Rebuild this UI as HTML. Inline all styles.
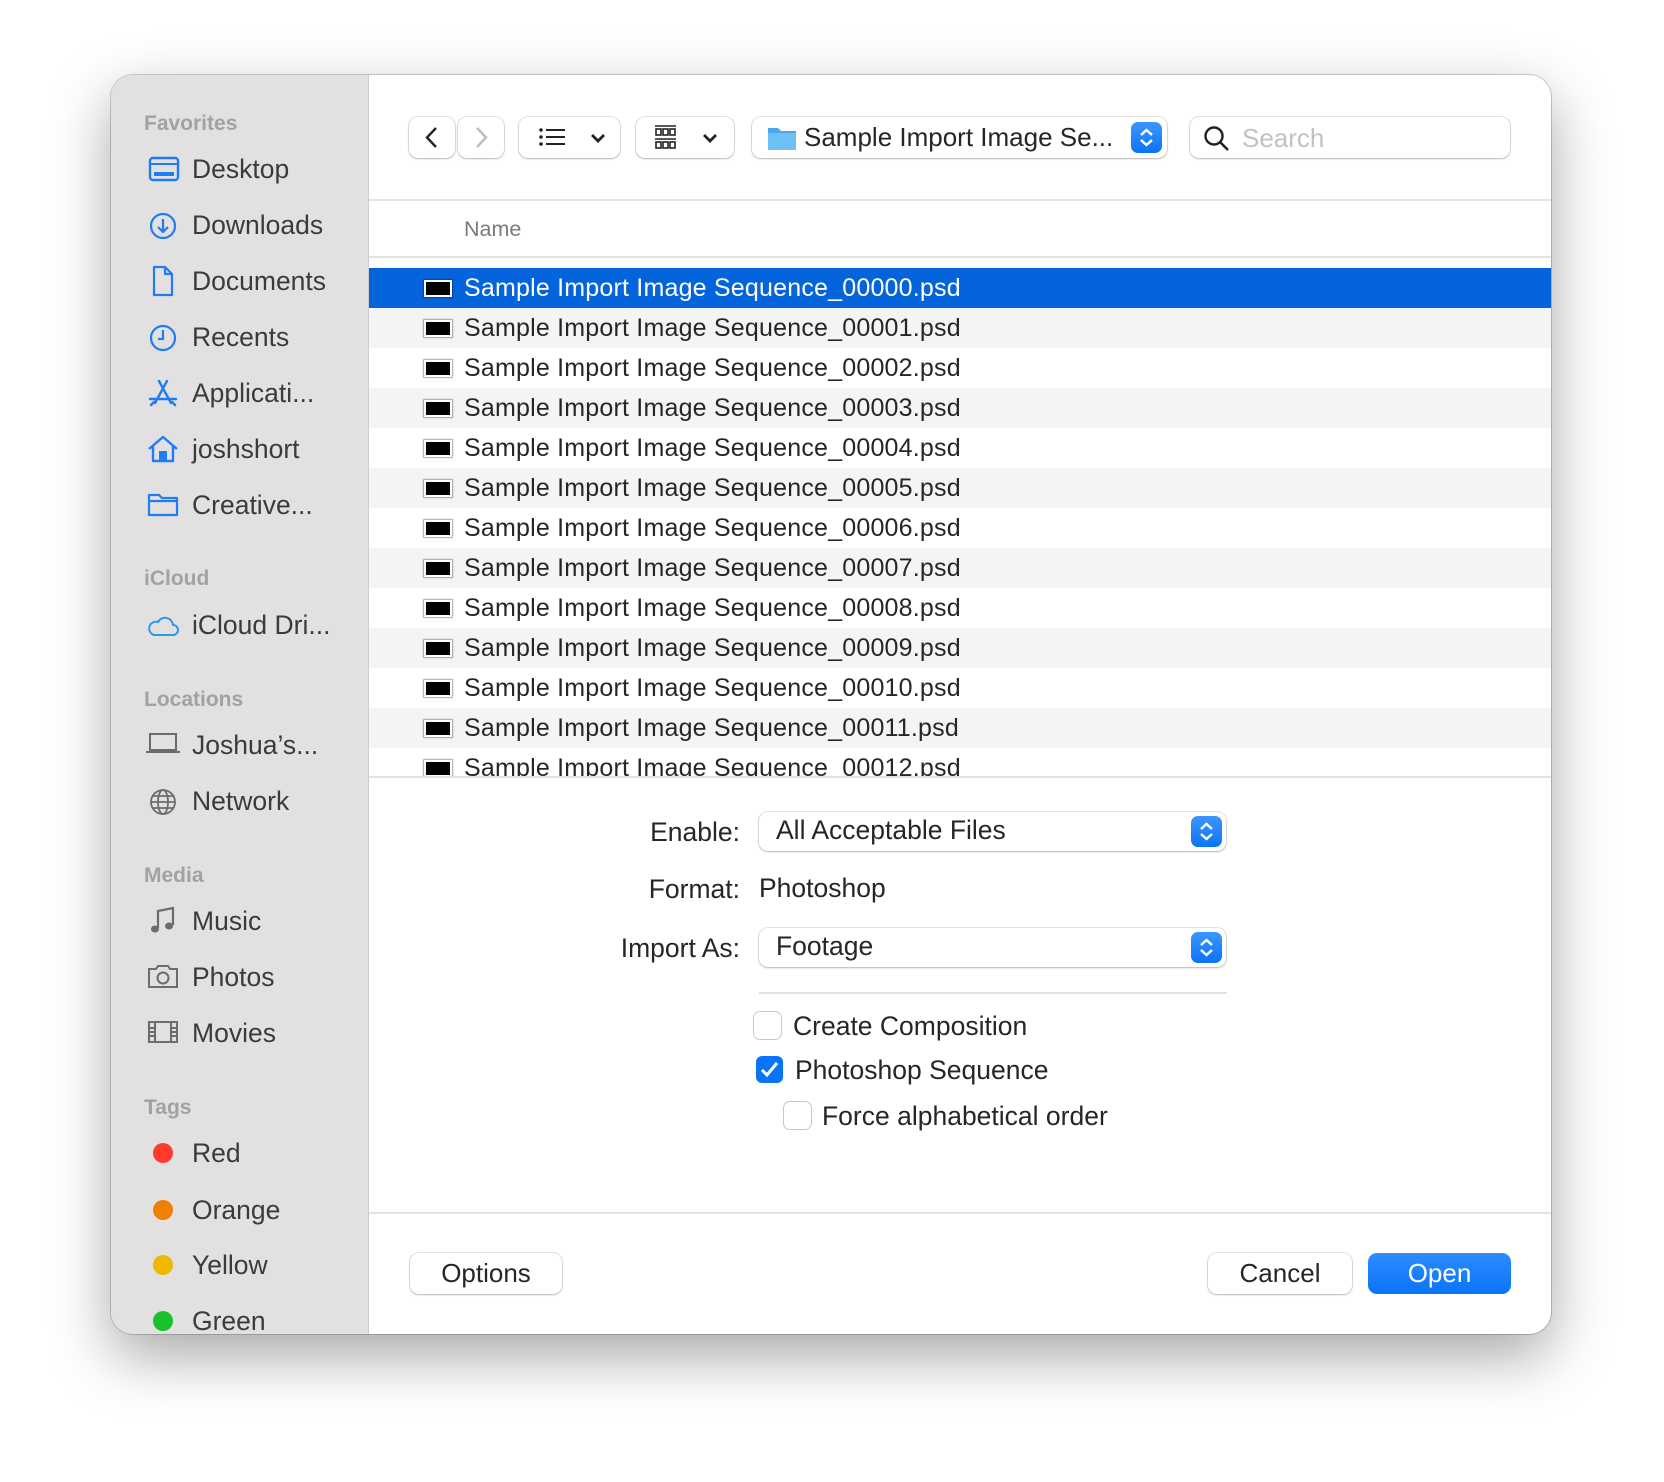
<!DOCTYPE html>
<html><head><meta charset="utf-8"><style>
*{margin:0;padding:0;box-sizing:border-box}
body{width:1664px;height:1482px;background:#fff;position:relative;overflow:hidden;font-family:"Liberation Sans",sans-serif;color:#262626}
.win{position:absolute;left:111px;top:75px;width:1440px;height:1259px;border-radius:22px;background:#fff;overflow:hidden;box-shadow:0 22px 60px rgba(0,0,0,.35),0 0 0 1px rgba(0,0,0,.18)}
.side{position:absolute;left:0;top:0;width:258px;height:100%;background:#e2e0e1;border-right:1px solid #cfcdce}
.a{position:absolute;white-space:nowrap}
.h{font-size:21px;font-weight:bold;color:#a3a2a3;height:30px;line-height:30px}
.si{font-size:26.5px;color:#3b3b3b;height:36px;line-height:36px}
.ic{position:absolute}
.btn{position:absolute;background:#fff;border-radius:9px;box-shadow:0 0 0 1px rgba(0,0,0,.1),0 1px 2px rgba(0,0,0,.2)}
.row{position:absolute;left:258px;width:1182px;height:40px;}
.row .fi{position:absolute;left:55px;top:12px;width:28px;height:17px;background:#000;border:2px solid #fff;box-shadow:0 0 1px 1px rgba(0,0,0,.35)}
.row .tx{position:absolute;left:95px;top:0;height:40px;line-height:40px;font-size:25px;letter-spacing:0.2px;color:#262626}
.g{background:#f3f4f4}
.sel{background:#0464dc}
.sel .tx{color:#fff}
.lbl{font-size:26.5px;color:#262626;height:36px;line-height:36px}
.step{position:absolute;width:31px;height:31px;border-radius:7px;background:linear-gradient(#3d96ff,#0a74f8)}
.cb{position:absolute;width:27px;height:27px;border-radius:6px;background:#fff;box-shadow:0 0 0 1px rgba(0,0,0,.22)}
</style></head><body>
<div class="win">
 <div class="side">
  <div class="a h" style="left:33px;top:34px">Favorites</div>
  <svg class="ic" style="left:37px;top:81px" width="32" height="26" viewBox="0 0 32 26"><rect x="2" y="2" width="28" height="22" rx="3" fill="none" stroke="#1f7cf5" stroke-width="2.4"/><line x1="2" y1="8" x2="30" y2="8" stroke="#1f7cf5" stroke-width="2"/><rect x="6" y="16" width="20" height="4" fill="#1f7cf5"/></svg>
  <div class="a si" style="left:81px;top:76px">Desktop</div>
  <svg class="ic" style="left:37px;top:136px" width="30" height="30" viewBox="0 0 30 30"><circle cx="15" cy="15" r="12" fill="none" stroke="#1f7cf5" stroke-width="2.2"/><path d="M15 8v13M10 16l5 5 5-5" fill="none" stroke="#1f7cf5" stroke-width="2.2"/></svg>
  <div class="a si" style="left:81px;top:132px">Downloads</div>
  <svg class="ic" style="left:40px;top:190px" width="24" height="32" viewBox="0 0 24 32"><path d="M3 2h11l7 7v21H3z M14 2v7h7" fill="none" stroke="#1f7cf5" stroke-width="2.2" stroke-linejoin="round"/></svg>
  <div class="a si" style="left:81px;top:188px">Documents</div>
  <svg class="ic" style="left:37px;top:248px" width="30" height="30" viewBox="0 0 30 30"><circle cx="15" cy="15" r="12" fill="none" stroke="#1f7cf5" stroke-width="2.2"/><path d="M15 7v9H10" fill="none" stroke="#1f7cf5" stroke-width="2.2"/></svg>
  <div class="a si" style="left:81px;top:244px">Recents</div>
  <svg class="ic" style="left:36px;top:303px" width="32" height="30" viewBox="0 0 32 30"><path d="M12 3l12 22M20 3L8 25M3 21h26M4 27l3-3M28 27l-3-3" fill="none" stroke="#1f7cf5" stroke-width="2.4" stroke-linecap="round"/></svg>
  <div class="a si" style="left:81px;top:300px">Applicati...</div>
  <svg class="ic" style="left:36px;top:359px" width="32" height="30" viewBox="0 0 32 30"><path d="M2 15L16 3l14 12M6 12v15h20V12" fill="none" stroke="#1f7cf5" stroke-width="2.4" stroke-linejoin="round"/><rect x="12" y="17" width="8" height="10" fill="#1f7cf5"/></svg>
  <div class="a si" style="left:81px;top:356px">joshshort</div>
  <svg class="ic" style="left:36px;top:416px" width="32" height="26" viewBox="0 0 32 26"><path d="M2 4h10l3 3h15v17H2z M2 10h28" fill="none" stroke="#1f7cf5" stroke-width="2.2" stroke-linejoin="round"/></svg>
  <div class="a si" style="left:81px;top:412px">Creative...</div>

  <div class="a h" style="left:33px;top:489px">iCloud</div>
  <svg class="ic" style="left:35px;top:539px" width="34" height="24" viewBox="0 0 34 24"><path d="M8 21h19a5 5 0 0 0 0-10 8 8 0 0 0-15-3 6 6 0 0 0-4 13z" fill="none" stroke="#2a9ae6" stroke-width="2"/></svg>
  <div class="a si" style="left:81px;top:532px">iCloud Dri...</div>

  <div class="a h" style="left:33px;top:610px">Locations</div>
  <svg class="ic" style="left:34px;top:657px" width="36" height="22" viewBox="0 0 36 22"><rect x="5" y="2" width="26" height="16" fill="none" stroke="#6c6c6c" stroke-width="2"/><line x1="1" y1="20" x2="35" y2="20" stroke="#6c6c6c" stroke-width="2"/></svg>
  <div class="a si" style="left:81px;top:652px">Joshua’s...</div>
  <svg class="ic" style="left:38px;top:713px" width="28" height="28" viewBox="0 0 28 28"><g fill="none" stroke="#6c6c6c" stroke-width="1.8"><circle cx="14" cy="14" r="12"/><ellipse cx="14" cy="14" rx="5" ry="12"/><path d="M2 14h24M4 8h20M4 20h20"/></g></svg>
  <div class="a si" style="left:81px;top:708px">Network</div>

  <div class="a h" style="left:33px;top:786px">Media</div>
  <svg class="ic" style="left:38px;top:831px" width="26" height="30" viewBox="0 0 26 30"><path d="M9 22V5l15-3v17" fill="none" stroke="#6c6c6c" stroke-width="2.2"/><ellipse cx="6" cy="23" rx="4" ry="3.5" fill="#6c6c6c"/><ellipse cx="20" cy="20" rx="4" ry="3.5" fill="#6c6c6c"/></svg>
  <div class="a si" style="left:81px;top:828px">Music</div>
  <svg class="ic" style="left:36px;top:888px" width="32" height="26" viewBox="0 0 32 26"><path d="M2 6h7l2-3h10l2 3h7v18H2z" fill="none" stroke="#6c6c6c" stroke-width="2"/><circle cx="16" cy="15" r="5.5" fill="none" stroke="#6c6c6c" stroke-width="2"/></svg>
  <div class="a si" style="left:81px;top:884px">Photos</div>
  <svg class="ic" style="left:36px;top:945px" width="32" height="24" viewBox="0 0 32 24"><g fill="none" stroke="#6c6c6c" stroke-width="2"><rect x="2" y="2" width="28" height="20"/><path d="M8 2v20M24 2v20M2 8h6M2 12h6M2 16h6M24 8h6M24 12h6M24 16h6"/></g></svg>
  <div class="a si" style="left:81px;top:940px">Movies</div>

  <div class="a h" style="left:33px;top:1018px">Tags</div>
  <div class="ic" style="left:42px;top:1068px;width:20px;height:20px;border-radius:50%;background:#ff3b30"></div>
  <div class="a si" style="left:81px;top:1060px">Red</div>
  <div class="ic" style="left:42px;top:1125px;width:20px;height:20px;border-radius:50%;background:#f08000"></div>
  <div class="a si" style="left:81px;top:1117px">Orange</div>
  <div class="ic" style="left:42px;top:1180px;width:20px;height:20px;border-radius:50%;background:#ecb800"></div>
  <div class="a si" style="left:81px;top:1172px">Yellow</div>
  <div class="ic" style="left:42px;top:1236px;width:20px;height:20px;border-radius:50%;background:#18c22c"></div>
  <div class="a si" style="left:81px;top:1228px">Green</div>
 </div>

 <div class="btn" style="left:298px;top:42px;width:46px;height:41px"><svg width="46" height="41"><path d="M27 11l-9 9.5 9 9.5" fill="none" stroke="#222" stroke-width="2.4"/></svg></div>
 <div class="btn" style="left:347px;top:42px;width:46px;height:41px"><svg width="46" height="41"><path d="M19 11l9 9.5-9 9.5" fill="none" stroke="#bdbdbd" stroke-width="2.4"/></svg></div>
 <div class="btn" style="left:408px;top:42px;width:101px;height:41px"><svg width="101" height="41"><g fill="#222"><circle cx="22" cy="13" r="1.8"/><circle cx="22" cy="20" r="1.8"/><circle cx="22" cy="27" r="1.8"/></g><path d="M27 13h19M27 20h19M27 27h19" stroke="#222" stroke-width="2"/><path d="M73 18l6 6 6-6" fill="none" stroke="#222" stroke-width="2.8"/></svg></div>
 <div class="btn" style="left:525px;top:42px;width:98px;height:41px"><svg width="98" height="41"><path d="M19 9h21M19 22h21" stroke="#222" stroke-width="1.6"/><g fill="none" stroke="#222" stroke-width="1.6"><rect x="20" y="12" width="5" height="6"/><rect x="27" y="12" width="5" height="6"/><rect x="34" y="12" width="5" height="6"/><rect x="20" y="25" width="5" height="6"/><rect x="27" y="25" width="5" height="6"/><rect x="34" y="25" width="5" height="6"/></g><path d="M68 18l6 6 6-6" fill="none" stroke="#222" stroke-width="2.8"/></svg></div>
 <div class="btn" style="left:641px;top:42px;width:415px;height:41px">
  <svg class="ic" style="left:15px;top:8px" width="30" height="26" viewBox="0 0 30 26"><path d="M1 3h10l3 3h15v19H1z" fill="#4aa8e8"/><rect x="1" y="8" width="28" height="17" rx="1" fill="#6cc0f5"/></svg>
  <div class="a" style="left:52px;top:0;height:41px;line-height:41px;font-size:26px;color:#262626">Sample Import Image Se...</div>
  <div class="step" style="left:379px;top:5px"><svg width="31" height="31"><path d="M10 13l5.5-5 5.5 5M10 18l5.5 5 5.5-5" fill="none" stroke="#fff" stroke-width="2.4"/></svg></div>
 </div>
 <div class="btn" style="left:1079px;top:42px;width:320px;height:41px">
  <svg class="ic" style="left:13px;top:8px" width="28" height="28"><circle cx="11" cy="11" r="8.5" fill="none" stroke="#222" stroke-width="2.4"/><path d="M17 17l8 8" stroke="#222" stroke-width="2.6"/></svg>
  <div class="a" style="left:52px;top:1px;height:41px;line-height:41px;font-size:26px;color:#c2c2c2">Search</div>
 </div>
 <div class="ic" style="left:258px;top:124px;width:1182px;height:2px;background:#e4e4e4"></div>
 <div class="a" style="left:353px;top:137px;height:34px;line-height:34px;font-size:21.5px;color:#7a7a7a">Name</div>
 <div class="ic" style="left:258px;top:181px;width:1182px;height:2px;background:#e4e4e4"></div>

 <div class="row sel" style="top:193px"><div class="fi"></div><div class="tx">Sample Import Image Sequence_00000.psd</div></div>
 <div class="row g" style="top:233px"><div class="fi"></div><div class="tx">Sample Import Image Sequence_00001.psd</div></div>
 <div class="row" style="top:273px"><div class="fi"></div><div class="tx">Sample Import Image Sequence_00002.psd</div></div>
 <div class="row g" style="top:313px"><div class="fi"></div><div class="tx">Sample Import Image Sequence_00003.psd</div></div>
 <div class="row" style="top:353px"><div class="fi"></div><div class="tx">Sample Import Image Sequence_00004.psd</div></div>
 <div class="row g" style="top:393px"><div class="fi"></div><div class="tx">Sample Import Image Sequence_00005.psd</div></div>
 <div class="row" style="top:433px"><div class="fi"></div><div class="tx">Sample Import Image Sequence_00006.psd</div></div>
 <div class="row g" style="top:473px"><div class="fi"></div><div class="tx">Sample Import Image Sequence_00007.psd</div></div>
 <div class="row" style="top:513px"><div class="fi"></div><div class="tx">Sample Import Image Sequence_00008.psd</div></div>
 <div class="row g" style="top:553px"><div class="fi"></div><div class="tx">Sample Import Image Sequence_00009.psd</div></div>
 <div class="row" style="top:593px"><div class="fi"></div><div class="tx">Sample Import Image Sequence_00010.psd</div></div>
 <div class="row g" style="top:633px"><div class="fi"></div><div class="tx">Sample Import Image Sequence_00011.psd</div></div>
 <div class="ic" style="left:258px;top:673px;width:1182px;height:29px;overflow:hidden"><div class="row" style="left:0;top:0"><div class="fi"></div><div class="tx">Sample Import Image Sequence_00012.psd</div></div></div>
 <div class="ic" style="left:258px;top:701px;width:1182px;height:2px;background:#e4e4e4"></div>

 <div class="a lbl" style="right:811px;top:739px">Enable:</div>
 <div class="btn" style="left:648px;top:737px;width:467px;height:39px">
  <div class="a" style="left:17px;top:0;height:39px;line-height:37px;font-size:26.5px">All Acceptable Files</div>
  <div class="step" style="left:432px;top:4px"><svg width="31" height="31"><path d="M10 13l5.5-5 5.5 5M10 18l5.5 5 5.5-5" fill="none" stroke="#fff" stroke-width="2.4"/></svg></div>
 </div>
 <div class="a lbl" style="right:811px;top:796px">Format:</div>
 <div class="a lbl" style="left:648px;top:795px">Photoshop</div>
 <div class="a lbl" style="right:811px;top:855px">Import As:</div>
 <div class="btn" style="left:648px;top:853px;width:467px;height:39px">
  <div class="a" style="left:17px;top:0;height:39px;line-height:37px;font-size:26.5px">Footage</div>
  <div class="step" style="left:432px;top:4px"><svg width="31" height="31"><path d="M10 13l5.5-5 5.5 5M10 18l5.5 5 5.5-5" fill="none" stroke="#fff" stroke-width="2.4"/></svg></div>
 </div>
 <div class="ic" style="left:648px;top:917px;width:468px;height:2px;background:#e2e2e2"></div>
 <div class="cb" style="left:643px;top:937px"></div>
 <div class="a lbl" style="left:682px;top:933px">Create Composition</div>
 <div class="cb" style="left:645px;top:981px;background:#0a74f8;box-shadow:none"><svg width="27" height="27"><path d="M6 14l5 5 10-12" fill="none" stroke="#fff" stroke-width="3"/></svg></div>
 <div class="a lbl" style="left:684px;top:977px">Photoshop Sequence</div>
 <div class="cb" style="left:673px;top:1027px"></div>
 <div class="a lbl" style="left:711px;top:1023px">Force alphabetical order</div>

 <div class="ic" style="left:258px;top:1137px;width:1182px;height:2px;background:#e4e4e4"></div>
 <div class="btn" style="left:299px;top:1178px;width:152px;height:41px;text-align:center;line-height:41px;font-size:26px">Options</div>
 <div class="btn" style="left:1097px;top:1178px;width:144px;height:41px;text-align:center;line-height:41px;font-size:26px">Cancel</div>
 <div class="btn" style="left:1257px;top:1178px;width:143px;height:41px;text-align:center;line-height:41px;font-size:26px;color:#fff;background:linear-gradient(#2b8cff,#0a74f8);box-shadow:none">Open</div>
</div>
</body></html>
